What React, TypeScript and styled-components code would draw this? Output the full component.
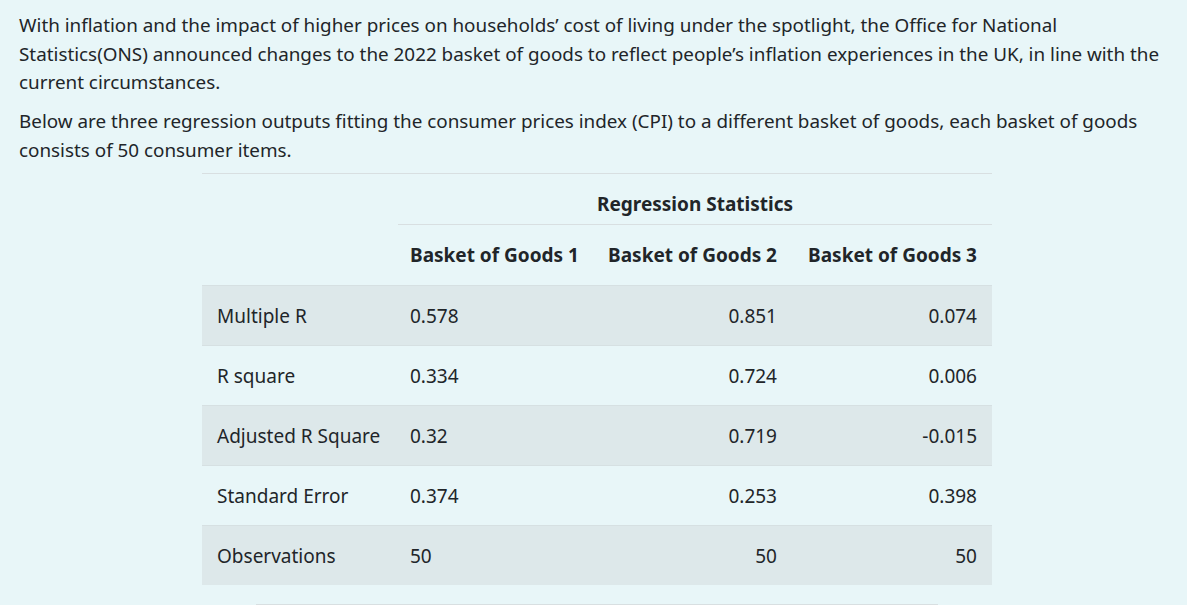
import React from "react";
import styled, { createGlobalStyle } from "styled-components";

const Global = createGlobalStyle`
  html, body { margin: 0; padding: 0; background: #e8f6f8; }
  body { font-family: "Noto Sans", "Open Sans", sans-serif; color: #212529; }
`;

const Page = styled.div`
  padding: 11px 17px 0 19px;
`;

const Para = styled.p`
  margin: 0;
  font-size: 18.85px;
  line-height: 28.5px;
  & + & {
    margin-top: 10.5px;
  }
`;

const Section = styled.div`
  display: flex;
  flex-direction: column;
  align-items: center;
  padding-left: 5px;
  margin-top: 8.5px;
`;

const Table = styled.table`
  width: 790px;
  border-collapse: collapse;
  font-size: 19px;
  table-layout: fixed;
  border-top: 1px solid #d8dfe1;
`;

const TitleCell = styled.th`
  height: 51px;
  box-sizing: border-box;
  font-weight: 700;
  text-align: center;
  padding: 11px 0 0;
  border-bottom: 1px solid #d8dfe1;
`;

const HeadCell = styled.th<{ $align?: "left" | "right" }>`
  height: 59px;
  font-weight: 700;
  padding: 1px 15px 0 12px;
  text-align: ${(p) => p.$align ?? "right"};
  white-space: nowrap;
`;

const Row = styled.tr<{ $striped: boolean }>`
  height: 60px;
  background: ${(p) => (p.$striped ? "#dde8ea" : "transparent")};
  border-top: 1px solid #d6e0e2;
`;

const LabelCell = styled.td`
  padding: 2px 0 0 15px;
  white-space: nowrap;
`;

const ValueCell = styled.td<{ $align?: "left" | "right" }>`
  padding: 2px 15px 0 12px;
  text-align: ${(p) => p.$align ?? "right"};
`;

const Rule = styled.hr`
  width: 682px;
  margin: 19px 0 0;
  border: 0;
  border-top: 1px solid #d8dfe1;
`;

const rows: [string, string, string, string][] = [
  ["Multiple R", "0.578", "0.851", "0.074"],
  ["R square", "0.334", "0.724", "0.006"],
  ["Adjusted R Square", "0.32", "0.719", "-0.015"],
  ["Standard Error", "0.374", "0.253", "0.398"],
  ["Observations", "50", "50", "50"],
];

export default function App() {
  return (
    <Page>
      <Global />
      <Para>
        With inflation and the impact of higher prices on households’ cost of living under the spotlight, the Office for National
        Statistics(ONS) announced changes to the 2022 basket of goods to reflect people’s inflation experiences in the UK, in line with the
        current circumstances.
      </Para>
      <Para>
        Below are three regression outputs fitting the consumer prices index (CPI) to a different basket of goods, each basket of goods
        consists of 50 consumer items.
      </Para>
      <Section>
        <Table>
          <colgroup>
            <col style={{ width: 196 }} />
            <col style={{ width: 194 }} />
            <col style={{ width: 200 }} />
            <col style={{ width: 200 }} />
          </colgroup>
          <thead>
            <tr>
              <th />
              <TitleCell colSpan={3}>Regression Statistics</TitleCell>
            </tr>
            <tr>
              <th />
              <HeadCell $align="left">Basket of Goods 1</HeadCell>
              <HeadCell>Basket of Goods 2</HeadCell>
              <HeadCell>Basket of Goods 3</HeadCell>
            </tr>
          </thead>
          <tbody>
            {rows.map((r, i) => (
              <Row key={r[0]} $striped={i % 2 === 0}>
                <LabelCell>{r[0]}</LabelCell>
                <ValueCell $align="left">{r[1]}</ValueCell>
                <ValueCell>{r[2]}</ValueCell>
                <ValueCell>{r[3]}</ValueCell>
              </Row>
            ))}
          </tbody>
        </Table>
        <Rule />
      </Section>
    </Page>
  );
}
